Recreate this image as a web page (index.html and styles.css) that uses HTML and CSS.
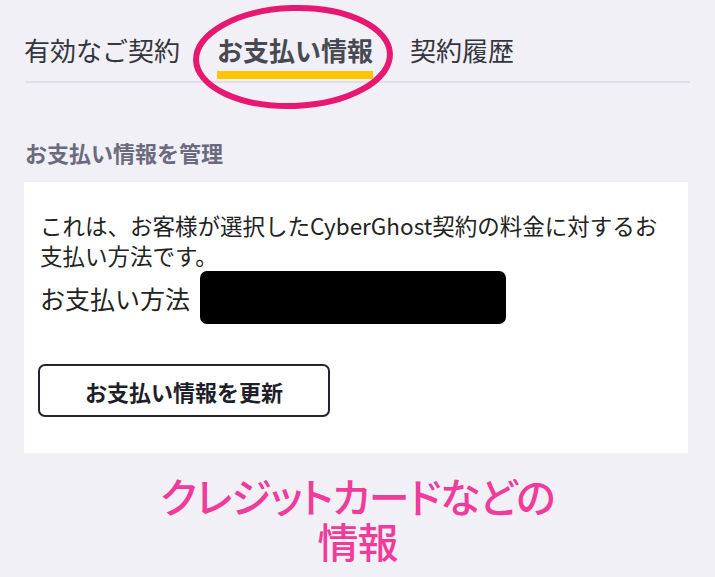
FILE: index.html
```html
<!DOCTYPE html>
<html lang="ja">
<head>
<meta charset="utf-8">
<link rel="stylesheet" href="styles.css">
</head>
<body>
<div class="page">
  <nav class="tabs">
    <span class="tab">有効なご契約</span>
    <span class="tab active">お支払い情報</span>
    <span class="tab">契約履歴</span>
  </nav>
  <div class="rule"></div>
  <h2 class="heading">お支払い情報を管理</h2>
  <section class="card">
    <p class="desc">これは、お客様が選択したCyberGhost契約の料金に対するお支払い方法です。</p>
    <div class="method">
      <span class="method-label">お支払い方法</span>
      <span class="redact"></span>
    </div>
    <button class="btn">お支払い情報を更新</button>
  </section>
  <div class="caption">
    <span class="cap-line">クレジットカードなどの</span>
    <span class="cap-line">情報</span>
  </div>
  <svg class="circle" width="215" height="115" viewBox="0 0 215 115">
    <ellipse cx="107" cy="57" rx="97" ry="49" fill="none" stroke="#e8176f" stroke-width="6" transform="rotate(-2 107 57)"/>
  </svg>
</div>
</body>
</html>
```
FILE: styles.css
```css
html, body {
  margin: 0;
  padding: 0;
  background: #f1f0f6;
}
body {
  font-family: "Noto Sans CJK JP", "Noto Sans", sans-serif;
  color: #222;
}
.page {
  position: relative;
  width: 715px;
  height: 577px;
  overflow: hidden;
  padding: 37px 0 0 0;
  box-sizing: border-box;
}
.tabs {
  display: flex;
  gap: 37px;
  margin-left: 24px;
}
.tab {
  font-size: 26px;
  line-height: 26px;
  padding-bottom: 8px;
  border-bottom: 8px solid transparent;
  color: #35353f;
  font-weight: 400;
}
.tab.active {
  font-weight: 700;
  color: #484953;
  border-bottom-color: #ffc500;
}
.rule {
  margin: 2px 0 0 25px;
  width: 665px;
  height: 2px;
  background: #dfdfe7;
}
.heading {
  margin: 58px 0 0 25px;
  font-size: 22px;
  line-height: 22px;
  font-weight: 700;
  color: #6a6b7e;
}
.card {
  margin: 19px 0 0 24px;
  width: 664px;
  height: 271px;
  box-sizing: border-box;
  background: #fff;
  padding: 28px 24px 0 16px;
}
.desc {
  margin: 0;
  font-size: 22.5px;
  line-height: 30px;
  color: #222;
}
.method {
  display: flex;
  align-items: center;
  gap: 10px;
  margin-top: 1px;
}
.method-label {
  font-size: 25px;
  line-height: 30px;
  color: #222;
}
.redact {
  display: block;
  width: 306px;
  height: 53px;
  background: #000;
  border-radius: 7px;
}
.btn {
  display: block;
  margin: 40px 0 0 -2px;
  width: 292px;
  height: 53px;
  box-sizing: border-box;
  border: 2px solid #24242e;
  border-radius: 7px;
  background: #fff;
  font-family: "Noto Sans CJK JP", sans-serif;
  font-size: 22px;
  font-weight: 700;
  color: #1f1f2a;
  padding: 0;
}
.caption {
  margin: 20px 0 0 0;
  width: 715px;
  display: flex;
  flex-direction: column;
  align-items: center;
  color: #f03b9b;
  font-size: 41px;
  font-weight: 500;
  font-feature-settings: "palt";
}
.cap-line {
  display: block;
  line-height: 45px;
  height: 45px;
  letter-spacing: -1px;
}
.circle {
  position: absolute;
  left: 186px;
  top: 0;
}
```
